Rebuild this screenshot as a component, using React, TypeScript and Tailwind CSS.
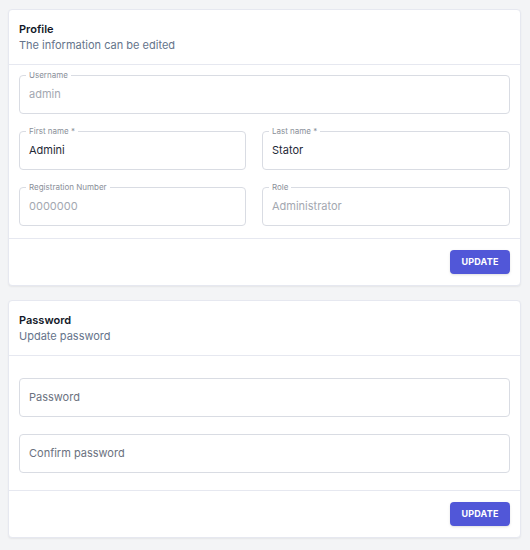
import React from 'react';

const font = { fontFamily: 'Inter, "Noto Sans", "Liberation Sans", sans-serif' };

interface FieldProps {
  label?: string;
  value?: string;
  placeholder?: string;
  muted?: boolean;
}

const OutlinedField: React.FC<FieldProps> = ({ label, value, placeholder, muted }) => {
  if (!label) {
    return (
      <div className="h-[39px] rounded-[4px] border border-[#d9dce3] flex items-center px-[9px]">
        <span className="text-[11px] text-[#6b7280]">{placeholder}</span>
      </div>
    );
  }
  return (
    <div className="relative h-[39px] rounded-[4px] border border-[#d9dce3] flex items-center px-[9px]">
      <span className="absolute -top-[6px] left-[6px] bg-white px-[3px] text-[8px] leading-[10px] text-[#8a8f99]">
        {label}
      </span>
      <span className={`text-[11px] ${muted ? 'text-[#a3a8b1]' : 'text-[#1f2937]'}`}>{value}</span>
    </div>
  );
};

const CardHeader: React.FC<{ title: string; subtitle: string }> = ({ title, subtitle }) => (
  <div className="px-[10px] pt-[11px] pb-[11px] border-b border-[#e6e8f0]">
    <h2 className="text-[11px] leading-[16px] font-semibold text-[#121828]">{title}</h2>
    <p className="text-[11px] leading-[16px] text-[#65748b]">{subtitle}</p>
  </div>
);

const UpdateButton = () => (
  <div className="flex justify-end px-[10px] py-[11px] border-t border-[#e6e8f0]">
    <button className="h-[24px] w-[60px] rounded-[4px] bg-[#5157d8] text-white text-[9px] font-bold tracking-[0.2px] shadow-sm">
      UPDATE
    </button>
  </div>
);

export default function App() {
  return (
    <div className="min-h-[550px] w-[530px] bg-[#f3f4f6] pt-[9px] px-[8px]" style={font}>
      <div className="w-[513px] bg-white border border-[#e6e8f0] rounded-[4px] shadow-[0_1px_2px_rgba(0,0,0,0.06)]">
        <CardHeader title="Profile" subtitle="The information can be edited" />
        <div className="px-[10px] pt-[10px] pb-[12px] flex flex-col gap-[17px]">
          <OutlinedField label="Username" value="admin" muted />
          <div className="grid grid-cols-[227px_1fr] gap-x-[16px] gap-y-[17px]">
            <OutlinedField label="First name *" value="Admini" />
            <OutlinedField label="Last name *" value="Stator" />
            <OutlinedField label="Registration Number" value="0000000" muted />
            <OutlinedField label="Role" value="Administrator" muted />
          </div>
        </div>
        <UpdateButton />
      </div>

      <div className="mt-[14px] w-[513px] bg-white border border-[#e6e8f0] rounded-[4px] shadow-[0_1px_2px_rgba(0,0,0,0.06)]">
        <CardHeader title="Password" subtitle="Update password" />
        <div className="px-[10px] pt-[22px] pb-[17px] flex flex-col gap-[17px]">
          <OutlinedField placeholder="Password" />
          <OutlinedField placeholder="Confirm password" />
        </div>
        <UpdateButton />
      </div>
    </div>
  );
}
